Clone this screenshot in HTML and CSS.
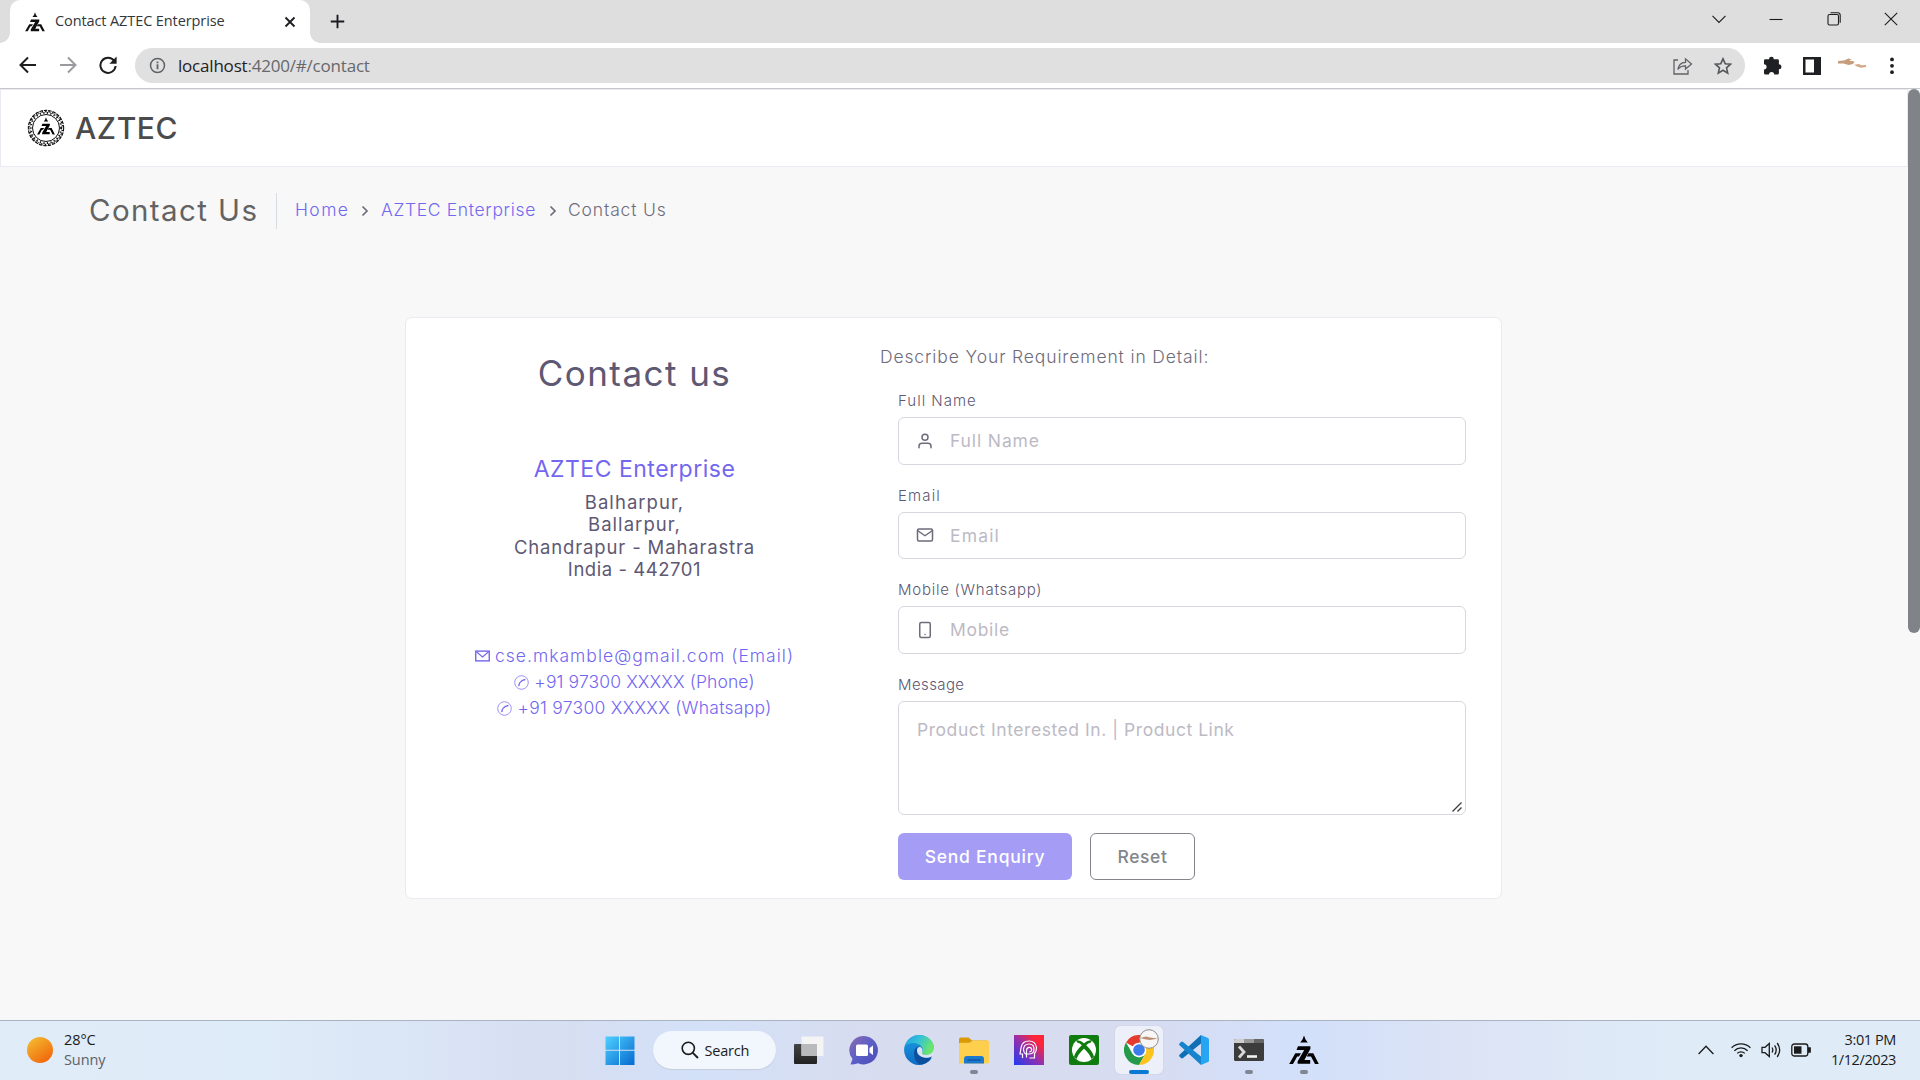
FILE: index.html
```html
<!DOCTYPE html>
<html lang="en">
<head>
<meta charset="utf-8">
<title>Contact AZTEC Enterprise</title>
<link rel="stylesheet" href="styles.css">
</head>
<body>
<svg class="defs" width="0" height="0">
  <defs>
    <symbol id="aztec" viewBox="0 0 30 30">
      <path d="M15 .5l1.500 4 2.300 3h-7.600l2.300-3z"/>
      <path d="M9 11.200h12.400v2.600L15.400 25h5.800v3.800H8.600v-2.400L15.200 15H7.500z"/>
      <path d="M6.300 18.200H12l-2 3.200H8.200L4 29H.2z"/>
      <path d="M19.400 18.200h4.900L29.800 29H26l-4-7.600h-4.200z"/>
    </symbol>
  </defs>
</svg>

<div class="tabstrip">
  <div class="tab">
    <svg class="tab-icon"><use href="#aztec"/></svg>
    <span class="tab-title">Contact AZTEC Enterprise</span>
    <svg class="tab-close" viewBox="0 0 12 12"><path d="M1.500 1.500l9 9M10.500 1.500l-9 9" fill="none" stroke="#1b1c1f" stroke-width="1.800"/></svg>
  </div>
  <svg class="newtab" viewBox="0 0 16 16"><path d="M8 .8v14.400M.8 8h14.400" stroke="#1b1c1f" stroke-width="2"/></svg>
  <div class="winctl">
    <svg width="14" height="14" viewBox="0 0 14 14"><path d="M.5 3.800L7 10.500l6.500-6.700"/></svg>
    <svg width="14" height="14" viewBox="0 0 14 14"><path d="M.5 7.500h13"/></svg>
    <svg width="14" height="14" viewBox="0 0 14 14"><rect x="1" y="2.500" width="10.500" height="10.500" rx="1.500"/><path d="M3.500.8h7.300q2.400 0 2.400 2.400v7.500"/></svg>
    <svg width="14" height="14" viewBox="0 0 14 14"><path d="M.8.800l12.400 12.400M13.200.8L.8 13.200"/></svg>
  </div>
</div>

<div class="toolbar">
  <svg class="nav" viewBox="0 0 18 18"><path d="M17 9H2M9 1.500L1.500 9 9 16.500" stroke="#1d1e20"/></svg>
  <svg class="nav" viewBox="0 0 18 18"><path d="M1 9h15M9 1.500L16.500 9 9 16.500" stroke="#9a9b9e"/></svg>
  <svg class="nav" viewBox="0 0 18 18"><path d="M15.200 4.800A7.600 7.600 0 1 0 16.600 10" stroke="#1d1e20"/><path d="M17.600.6v7.200h-7.200z" fill="#1d1e20" stroke="none"/></svg>
  <div class="address">
    <svg class="info" viewBox="0 0 18 18"><circle cx="9" cy="9" r="7.400" fill="none" stroke="#5f6368" stroke-width="1.600"/><path d="M9 7.800v5.200M9 4.800v1.900" stroke="#5f6368" stroke-width="1.900"/></svg>
    <span class="url"><b>localhost</b>:4200/#/contact</span>
    <svg class="share" viewBox="0 0 20 18"><path d="M5 3H1v14h14v-4M4.800 12.500C5.500 8 8.500 5.500 12.500 5.300V1.800l6 5.200-6 5V8.800C9 8.800 6.500 9.800 4.800 12.500z" fill="none" stroke="#606267" stroke-width="1.300"/></svg>
    <svg class="star" viewBox="0 0 18 18"><path d="M9 1.800l2.200 4.900 5.300.5-4 3.600 1.200 5.300L9 13.300l-4.700 2.800 1.200-5.300-4-3.600 5.300-.5z" fill="none" stroke="#55575b" stroke-width="1.600"/></svg>
  </div>
  <svg class="puzzle" viewBox="0 0 19 19"><path d="M1 4.500Q1 3.200 2.300 3.200H6a2.400 2.400 0 0 1 4.800 0h3.700q1.400 0 1.400 1.400v3.700a2.500 2.500 0 0 1 0 5V17q0 1.500-1.400 1.500h-3.300a2.600 2.600 0 0 0-5.200 0H2.400Q1 18.500 1 17v-3.600a2.600 2.600 0 0 0 0-5.200z" fill="#1f2023"/></svg>
  <svg class="panel" viewBox="0 0 18 18"><path d="M0 0h18v18H0zM2.500 2.500v13H11v-13z" fill="#1f2023" fill-rule="evenodd"/></svg>
  <svg class="avatar" viewBox="0 0 28 12"><path d="M0 3l6-.6 4.500-1.900 3 .8-2.500 1.300 5.500.8-1.500 2.600-4.500 1-5-1.400L0 5.600z" fill="#c69c7c"/><path d="M16 6.800l5-.7 2 1.200 5-.2v1.800l-5 .9-4-1.200z" fill="#d3a888"/></svg>
  <svg class="dots" viewBox="0 0 4 18"><g fill="#1f2023"><circle cx="2" cy="2.400" r="1.900"/><circle cx="2" cy="8.800" r="1.900"/><circle cx="2" cy="15.200" r="1.900"/></g></svg>
</div>

<div class="viewport">
  <main class="page">
    <header class="header">
      <svg class="logo" viewBox="0 0 38 38">
        <circle cx="19" cy="19" r="17" fill="none" stroke="#111" stroke-width="2.400" stroke-dasharray="3.400 .9"/>
        <circle cx="19" cy="19" r="15.200" fill="none" stroke="#111" stroke-width="2" stroke-dasharray="1.200 2.400"/>
        <circle cx="19" cy="19" r="13.500" fill="none" stroke="#111" stroke-width="1"/>
        <circle cx="19" cy="19" r="16.600" fill="none" stroke="#fff" stroke-width="1" stroke-dasharray="2 1.400"/>
        <use href="#aztec" x="9" y="8" width="20" height="18"/>
      </svg>
      <span class="brand">AZTEC</span>
    </header>

    <div class="crumbs">
      <h2 class="crumb-title">Contact Us</h2>
      <a class="crumb-home">Home</a>
      <svg class="chev" viewBox="0 0 8 12"><path d="M1.500 1.500L6 6l-4.500 4.500"/></svg>
      <a class="crumb-org">AZTEC Enterprise</a>
      <svg class="chev" viewBox="0 0 8 12"><path d="M1.500 1.500L6 6l-4.500 4.500"/></svg>
      <span class="crumb-here">Contact Us</span>
    </div>

    <section class="card">
      <div class="details">
        <h1>Contact us</h1>
        <h3>AZTEC Enterprise</h3>
        <div class="postal">
          <p class="a1">Balharpur,</p>
          <p class="a1">Ballarpur,</p>
          <p class="a3">Chandrapur - Maharastra</p>
          <p class="a4">India - 442701</p>
        </div>
        <div class="links">
          <a class="l-mail"><svg viewBox="0 0 16 12"><rect x=".8" y=".8" width="14.400" height="10.400" fill="none" stroke="currentColor" stroke-width="1.500"/><path d="M1.500 1.500L8 7l6.500-5.500" fill="none" stroke="currentColor" stroke-width="1.200"/></svg>cse.mkamble@gmail.com (Email)</a>
          <a class="l-phone"><svg viewBox="0 0 15 15"><circle cx="7.500" cy="7.500" r="6.800" fill="none" stroke="currentColor" stroke-width=".7"/><path d="M4.200 11.500Q3.800 8 7.500 5.200q2-1.500 4.200-1.500l-.6 1.800-1.900.2Q6 7.500 5.600 9.300l.5 1z" fill="currentColor"/></svg>+91 97300 XXXXX (Phone)</a>
          <a class="l-whats"><svg viewBox="0 0 15 15"><circle cx="7.500" cy="7.500" r="6.800" fill="none" stroke="currentColor" stroke-width=".7"/><path d="M4.200 11.500Q3.800 8 7.500 5.200q2-1.500 4.200-1.500l-.6 1.800-1.900.2Q6 7.500 5.600 9.300l.5 1z" fill="currentColor"/></svg>+91 97300 XXXXX (Whatsapp)</a>
        </div>
      </div>

      <form class="enquiry">
        <p class="lead">Describe Your Requirement in Detail:</p>
        <div class="fields">
          <label class="lb-name">Full Name</label>
          <div class="control">
            <svg viewBox="0 0 24 24"><path d="M20 21v-2a4 4 0 0 0-4-4H8a4 4 0 0 0-4 4v2"/><circle cx="12" cy="7" r="4"/></svg>
            <input class="in-name" placeholder="Full Name">
          </div>
          <label class="lb-email">Email</label>
          <div class="control">
            <svg viewBox="0 0 24 24"><rect x="2" y="4" width="20" height="16" rx="2"/><path d="M22 6l-10 7L2 6"/></svg>
            <input class="in-email" placeholder="Email">
          </div>
          <label class="lb-mobile">Mobile (Whatsapp)</label>
          <div class="control">
            <svg viewBox="0 0 24 24"><rect x="5" y="2" width="14" height="20" rx="2"/><path d="M12 18h.01"/></svg>
            <input class="in-mobile" placeholder="Mobile">
          </div>
          <label class="lb-msg">Message</label>
          <div class="area">
            <textarea placeholder="Product Interested In. | Product Link"></textarea>
            <svg class="grip" viewBox="0 0 10 10"><path d="M.5 9.500l9-9M5.500 9.500l4-4" stroke="#3d3d3d" stroke-width="1.300"/></svg>
          </div>
          <div class="buttons">
            <button type="button" class="send">Send Enquiry</button>
            <button type="button" class="reset">Reset</button>
          </div>
        </div>
      </form>
    </section>
  </main>
  <div class="scrollbar"><div class="thumb"></div></div>
</div>

<footer class="taskbar">
  <div class="weather">
    <span class="sun"></span>
    <div><div class="temp">28°C</div><div class="sky">Sunny</div></div>
  </div>
  <div class="apps">
    <svg class="app" viewBox="0 0 30 30"><defs><linearGradient id="w" x1="0" y1="0" x2="1" y2="1"><stop offset="0" stop-color="#4fd0ff"/><stop offset="1" stop-color="#0669cf"/></linearGradient></defs><path d="M.5 1.500H14v13.300H.5zM15 1.500h14.500v13.300H15zM.5 15.800H14V30H.5zM15 15.800h14.500V30H15z" fill="url(#w)"/></svg>
    <div class="search">
      <svg viewBox="0 0 18 18"><circle cx="7.300" cy="7.300" r="6.100" fill="none" stroke="#1b1b1b" stroke-width="1.600"/><path d="M11.800 11.800l5.200 5.200" stroke="#1b1b1b" stroke-width="1.900"/></svg>
      <span>Search</span>
    </div>
    <svg class="app" viewBox="0 0 30 30"><defs><linearGradient id="tv" x1="0" y1="0" x2="0" y2="1"><stop offset="0" stop-color="#444"/><stop offset="1" stop-color="#222"/></linearGradient></defs><rect x="0" y="9" width="23" height="20" rx="1" fill="url(#tv)"/><rect x="7.500" y="1.500" width="22" height="19.500" rx="1" fill="#f4f4f4"/><path d="M7.500 9H23v12H7.500z" fill="#b9babb"/></svg>
    <svg class="app" viewBox="0 0 30 30"><defs><linearGradient id="ch" x1="0" y1="0" x2="1" y2="1"><stop offset="0" stop-color="#8d6bb0"/><stop offset=".5" stop-color="#5b5fc7"/><stop offset="1" stop-color="#4a4bb8"/></linearGradient></defs><path d="M15 1a14.200 14.200 0 1 1-6 27.200q-3 1.300-7.500 1.300l2-5.500A14.200 14.200 0 0 1 15 1z" fill="url(#ch)"/><rect x="7" y="9.500" width="12" height="11.500" rx="1.500" fill="#fff"/><path d="M20.500 13l3.500-2.500v9.500l-3.500-2.500z" fill="#fff"/></svg>
    <svg class="app" viewBox="0 0 30 30"><defs><linearGradient id="e1" x1="0" y1="0" x2="1" y2=".4"><stop offset="0" stop-color="#1b9de2"/><stop offset=".5" stop-color="#35c1d8"/><stop offset="1" stop-color="#6be56b"/></linearGradient><linearGradient id="e2" x1="0" y1="0" x2="0" y2="1"><stop offset="0" stop-color="#1b9de2"/><stop offset="1" stop-color="#0f6bc4"/></linearGradient></defs><path d="M30 13A15 15 0 1 0 27.500 23.500L18 17z" fill="url(#e2)"/><path d="M.5 11.500C3 4 9 0 15 0c9 0 15 6.500 15 12.500 0 5-3.500 7.500-7.500 7.500-3 0-5-1-4.500-2.500 1.800-3 .5-6-3-8C10 7 4 8 .5 11.500z" fill="url(#e1)"/><path d="M10 18c0-4 3-6.800 5.500-6.500-4 3.500-1 10.500 5.500 11.200 3 .3 5.500-1 7.300-2C25.500 26.500 21 29.500 16.500 29.500 12 28 10 23 10 18z" fill="#0c4f9c"/><path d="M13 14.500c.5-2.200 2.500-3 4-2 2 1.500 1.800 3.200 1 5-.3 1.500 1.500 2.500 4.500 2.500 3 0 6-1.500 7.300-4.500l-.8 5c-2 1.800-5 2.500-8 2.200C16 22 12.500 19 13 14.500z" fill="#dce3f7"/></svg>
    <div class="slot"><svg class="app" viewBox="0 0 30 30"><path d="M0 4.500Q0 2.500 2 2.500h7.500l3.500 3H28v6H0z" fill="#d99a05"/><path d="M0 9q0-1.300 1.300-1.300h9L14 5.500h14.500Q30 5.500 30 7v20q0 1.500-1.500 1.500H0z" fill="#fdcf4c"/><path d="M5 24q0-3 3-3h14q3 0 3 3v4.500H5z" fill="#1a78cf"/><path d="M8.500 25h13" stroke="#0b4f96" stroke-width="1.200"/></svg></div>
    <svg class="app" viewBox="0 0 30 30"><defs><linearGradient id="ai" x1="0" y1="1" x2="1" y2="0"><stop offset="0" stop-color="#1c3cf5"/><stop offset=".5" stop-color="#9a2fa8"/><stop offset=".8" stop-color="#ff2536"/></linearGradient></defs><path d="M0 0h30v30H0z" fill="url(#ai)"/><path d="M8.500 23v-4H6L7.200 12Q8.500 6 15 6t7.500 6.500q0 4-2 6V23h-5M11.500 19q-2-1.500-2-4.500Q9.800 9 15 9t5 5.500q0 4.500-5 4.500h-3.500M12.500 22.500v-7q.2-3.200 2.700-3.200t2.500 2.400q-.2 2.200-2.500 2.300" fill="none" stroke="#fff" stroke-width="1.200"/></svg>
    <svg class="app" viewBox="0 0 30 30"><rect width="30" height="30" rx="2" fill="#107c10"/><circle cx="15" cy="15" r="12" fill="#fff"/><path d="M7 5.500q4-.8 8 2.800 4-3.600 8-2.800l-1.500 2.300Q19 8 17.200 10.300q6.500 6 7.800 11.500l-2.500 2.200Q20.500 18.500 15 13.700 9.500 18.500 7.500 24L5 21.800q1.300-5.500 7.800-11.500Q11 8 8.500 7.800z" fill="#107c10"/></svg>
    <div class="slot on">
      <svg class="app" viewBox="0 0 30 30"><circle cx="15" cy="15" r="15" fill="#fff"/><path d="M15 15L2 7.500A15 15 0 0 1 28 7.500H15z" fill="#e33b2e"/><path d="M2 7.500A15 15 0 0 0 15 30l6.500-11.250L15 22.500 8.500 18.750z" fill="#269a4b"/><path d="M28 7.500A15 15 0 0 1 15 30l6.500-11.250Q23.500 12 15 7.500z" fill="#fcc31e"/><circle cx="15" cy="15" r="7.300" fill="#fff"/><circle cx="15" cy="15" r="5.800" fill="#3b7ded"/></svg>
      <svg class="badge" viewBox="0 0 20 20"><circle cx="10" cy="10" r="9.300" fill="#f8f6f4" stroke="#8b8b8b"/><path d="M1 9l6-1.500 4 1 8 1-8 1.500-5-.8z" fill="#b98e74"/></svg>
    </div>
    <svg class="app" viewBox="0 0 30 30"><path d="M22 0v8.500L4 23q-1 .8-2 0L.5 21.500q-.8-1 0-1.800z" fill="#0f6fb5"/><path d="M22 30v-8.500L4 7Q3 6.200 2 7L.5 8.500q-.8 1 0 1.800z" fill="#1684cd"/><path d="M22 0l7 3q1 .5 1 1.500v21q0 1-1 1.500l-7 3z" fill="#27a5f2"/></svg>
    <div class="slot"><svg class="app" viewBox="0 0 30 30"><rect y="4" width="30" height="22" rx="1.500" fill="#3c3c3c"/><path d="M0 8V5.500Q0 4 1.500 4H10v4z" fill="#cfcfcf"/><path d="M10 4h10v4H10z" fill="#999"/><path d="M20 4h8.500Q30 4 30 5.500V8H20z" fill="#666"/><path d="M5 11.500l5 5.500-5 5.500" fill="none" stroke="#d9d9d9" stroke-width="2.800"/><path d="M13 21.500h10" stroke="#f2f2f2" stroke-width="2.600"/></svg></div>
    <div class="slot"><svg class="app" viewBox="0 0 30 30"><use href="#aztec"/></svg></div>
  </div>
  <div class="tray">
    <svg class="t-up" viewBox="0 0 16 10"><path d="M.6 9L8 1.200 15.400 9"/></svg>
    <svg class="t-wifi" viewBox="0 0 20 16"><path d="M.6 5.800a13.300 13.300 0 0 1 18.800 0M3.400 8.700a9.300 9.300 0 0 1 13.200 0M6.200 11.400a5.400 5.400 0 0 1 7.600 0"/><circle cx="10" cy="13.600" r="1.700" fill="#1b1b1b" stroke="none"/></svg>
    <svg class="t-vol" viewBox="0 0 20 16"><path d="M1 5.300h3L8.300 1.500v13L4 10.700H1zM11 5.500q1.600 2.500 0 5M13.600 3.300q3.200 4.700 0 9.400M16.200 1q5 7 0 14"/></svg>
    <svg class="t-bat" viewBox="0 0 20 14"><rect x=".8" y="1" width="16" height="12" rx="2.500"/><rect x="3" y="3.300" width="7.500" height="7.400" fill="#1b1b1b" stroke="none"/><path d="M17.500 5h1.700v4h-1.700z" fill="#1b1b1b"/></svg>
    <div class="clock"><div>3:01 PM</div><div>1/12/2023</div></div>
  </div>
</footer>
</body>
</html>
```
FILE: styles.css
```css
* { box-sizing: border-box; }
body { margin: 0; width: 1920px; height: 1080px; overflow: hidden; display: flex; flex-direction: column; font-family: Inter, "Open Sans", sans-serif; color: #6e6b7b; background: #fff; }
h1, h2, h3, p { margin: 0; }
svg { display: block; flex: none; }
.defs { position: absolute; }

/* browser chrome */
.tabstrip { height: 43px; flex: none; background: #dedede; display: flex; align-items: center; padding-left: 10px; font-family: "Open Sans", sans-serif; }
.tab { width: 300px; height: 43px; background: #fff; border-radius: 10px 10px 0 0; display: flex; align-items: center; padding-left: 15px; position: relative; }
.tab::before, .tab::after { content: ""; position: absolute; bottom: 0; width: 10px; height: 10px; }
.tab::before { left: -10px; background: radial-gradient(circle at 0 0, #dedede 9.5px, #fff 10px); }
.tab::after { right: -10px; background: radial-gradient(circle at 100% 0, #dedede 9.5px, #fff 10px); }
.tab-icon { width: 20px; height: 20px; fill: #111; }
.tab-title { margin-left: 10px; width: 229px; font-size: 14.5px; letter-spacing: -.1px; color: #33363a; white-space: nowrap; margin-top: -2px; }
.tab-close { width: 12px; height: 12px; }
.newtab { width: 15px; height: 15px; margin-left: 20px; }
.winctl { margin-left: auto; display: flex; gap: 43.5px; margin-right: 22px; margin-top: -6px; fill: none; stroke: #1d1d1d; stroke-width: 1.1; }
.toolbar { height: 46px; flex: none; border-bottom: 1px solid #c6c7ca; display: flex; align-items: center; padding-left: 19px; }
.nav { width: 18px; height: 18px; margin-right: 22px; margin-top: -1px; fill: none; stroke-width: 2; }
.nav:nth-child(3) { margin-right: 18px; }
.address { width: 1610px; height: 35px; border-radius: 18px; background: #e0e0e0; display: flex; align-items: center; padding-left: 14px; }
.info { width: 17px; height: 17px; }
.url { margin-left: 12px; font: 17px "Open Sans", sans-serif; letter-spacing: -.2px; color: #66686c; margin-top: -1px; }
.url b { font-weight: 400; color: #1f2023; }
.share { width: 20px; height: 18px; margin-left: auto; }
.star { width: 18px; height: 18px; margin: 0 13px 0 21px; }
.puzzle { width: 19px; height: 19px; margin-left: 18px; }
.panel { width: 18px; height: 18px; margin-left: 21px; }
.avatar { width: 28px; height: 12px; margin-left: 17px; margin-top: -3px; }
.dots { width: 4px; height: 18px; margin-left: 24px; }

/* page */
.viewport { height: 931px; flex: none; display: flex; background: #f8f8f8; }
.page { width: 1908px; flex: none; }
.scrollbar { width: 12px; background: #f8f8f8; }
.thumb { height: 544px; border-radius: 6px; background: #808488; }
.header { height: 78px; background: #fff; border: 1px solid #ebe9f1; display: flex; align-items: center; padding-left: 26px; }
.logo { width: 38px; height: 38px; }
.brand { margin-left: 10px; margin-top: -1px; font-size: 30px; font-weight: 550; letter-spacing: .6px; color: #4b4b4b; }
.crumbs { display: flex; align-items: center; height: 36px; margin: 26px 0 0 89px; font-size: 17.5px; line-height: 20px; }
.crumbs > a, .crumbs > span { margin-top: -2px; font-weight: 350; }
.crumb-title { font-size: 29.5px; font-weight: 420; letter-spacing: 1.4px; color: #636363; height: 36px; line-height: 34px; width: 188px; border-right: 1px solid #d6dce1; margin-right: 18px; white-space: nowrap; }
.crumbs a { color: #7367f0; white-space: nowrap; }
.crumb-home { letter-spacing: 1.4px; width: 66px; }
.crumb-org { letter-spacing: .65px; width: 168px; margin-left: 12px; }
.crumb-here { letter-spacing: .85px; margin-left: 11px; }
.chev { width: 8px; height: 12px; fill: none; stroke: #6e6b7b; stroke-width: 1.7; }
.card { width: 1097px; height: 582px; margin: 88px 0 0 405px; background: #fff; border: 1px solid #ebe9f1; border-radius: 7px; display: flex; }
.details { width: 457px; padding-top: 34px; text-align: center; color: #5e5873; }
.details h1 { font-size: 35px; line-height: 42px; font-weight: 420; letter-spacing: 1.45px; }
.details h3 { font-size: 23px; line-height: 28px; font-weight: 430; letter-spacing: .5px; color: #7367f0; margin-top: 61px; }
.postal { margin-top: 8px; font-size: 18.5px; line-height: 22.3px; font-weight: 420; }
.a1 { letter-spacing: 1.05px; }
.a3 { letter-spacing: .85px; }
.a4 { letter-spacing: .55px; }
.links { margin-top: 63px; font-size: 17.5px; line-height: 26px; font-weight: 350; }
.links a { display: flex; justify-content: center; align-items: center; gap: 5px; color: #7367f0; }
.links svg { width: 15px; height: 15px; }
.l-mail { letter-spacing: 1.02px; }
.links .l-mail svg { width: 15px; height: 12px; }
.l-phone { letter-spacing: .12px; }
.l-whats { letter-spacing: .27px; }
.enquiry { width: 586px; margin-left: 17px; padding-top: 27px; }
.lead { font-size: 17.5px; line-height: 24px; letter-spacing: .87px; font-weight: 360; }
.fields { padding: 22px 0 0 18px; }
.fields label { display: block; font-size: 15px; line-height: 20px; margin-bottom: 6px; color: #5e5873; font-weight: 350; }
.fields .lb-name { letter-spacing: 1px; }
.fields .lb-email { letter-spacing: 1.15px; }
.fields .lb-mobile { letter-spacing: .75px; }
.fields .lb-msg { letter-spacing: .4px; }
.control { height: 47.6px; border: 1px solid #d8d6de; border-radius: 6px; margin-bottom: 21px; display: flex; align-items: center; padding-left: 17px; }
.control svg { width: 18px; height: 18px; fill: none; stroke: #6e6b7b; stroke-width: 2; stroke-linecap: round; stroke-linejoin: round; }
.control input { border: 0; outline: 0; padding: 0; margin-left: 16px; width: 480px; font: 17.5px Inter, sans-serif; background: none; }
::placeholder { color: #bcbac5; opacity: 1; }
.control .in-name { letter-spacing: .87px; }
.control .in-email { letter-spacing: 1.15px; }
.control .in-mobile { letter-spacing: .7px; }
.area { position: relative; height: 114px; }
.area textarea { display: block; width: 100%; height: 114px; resize: none; border: 1px solid #d8d6de; border-radius: 6px; padding: 15px 18px; font: 17.5px/26px Inter, sans-serif; letter-spacing: .55px; outline: 0; overflow: hidden; }
.grip { position: absolute; right: 4px; bottom: 3px; width: 10px; height: 10px; }
.buttons { display: flex; gap: 18px; margin-top: 18px; }
.buttons button { height: 47px; border-radius: 6px; font: 550 17.5px Inter, sans-serif; padding: 1px 0 0; }
.buttons .send { width: 174px; border: 0; background: #a59cf6; color: #fff; letter-spacing: .75px; }
.buttons .reset { width: 105px; border: 1px solid #82868b; background: #fff; color: #82868b; font-weight: 450; letter-spacing: .6px; }

/* taskbar */
.taskbar { height: 60px; flex: none; border-top: 1px solid #a9b3c2; background: linear-gradient(90deg, #e0ecf8 0, #deebf8 14%, #d6def2 30%, #d3e1f8 36%, #d8dcef 46%, #d8dcf0 58%, #d2e0fa 68%, #dce3f5 76%, #dfecf8 88%, #dfecf8 100%); display: grid; grid-template-columns: 604.5px 714.5px 1fr; font: 14.5px "Open Sans", sans-serif; color: #1b1b1b; }
.weather { display: flex; align-items: center; padding-left: 27px; gap: 11px; line-height: 20px; letter-spacing: -.1px; margin-top: -2px; }
.sun { width: 26px; height: 26px; border-radius: 50%; background: linear-gradient(145deg, #f3bd32 5%, #f26a0c 85%); }
.sky { color: #5c6167; }
.apps { display: flex; align-items: center; gap: 25px; height: 58px; }
.app { width: 30px; height: 30px; }
.apps > .app:first-child { margin-right: -7px; }
.search { width: 123px; height: 38px; border-radius: 19px; background: #f2f6fd; box-shadow: 0 1px 1px #c4cbdc; display: flex; align-items: center; padding-left: 28px; gap: 6px; margin-right: -7px; flex: none; }
.search svg { width: 18px; height: 18px; }
.search span { letter-spacing: -.2px; }
.slot { position: relative; width: 30px; height: 30px; }
.slot::after { content: ""; position: absolute; left: 11px; top: 35px; width: 8px; height: 4px; border-radius: 2px; background: #7f8591; }
.slot.on::before { content: ""; position: absolute; left: -9px; top: -9px; width: 48px; height: 48px; border-radius: 5px; background: #edf0f9; box-shadow: 0 0 1px #aab; }
.slot.on .app { position: relative; }
.slot.on::after { left: 5px; width: 20px; background: #0a78d4; }
.badge { position: absolute; left: 15px; top: -6px; width: 20px; height: 20px; }
.tray { display: flex; align-items: center; justify-content: flex-end; padding-right: 24px; height: 58px; fill: none; stroke: #1b1b1b; stroke-width: 1.3; }
.t-up { width: 16px; height: 10px; margin-right: 17px; }
.t-wifi { width: 20px; height: 16px; margin-right: 10px; }
.t-vol { width: 20px; height: 16px; margin-right: 10px; }
.t-bat { width: 20px; height: 14px; }
.clock { width: 85px; text-align: right; line-height: 20px; letter-spacing: -.4px; margin-top: -1px; }
```
